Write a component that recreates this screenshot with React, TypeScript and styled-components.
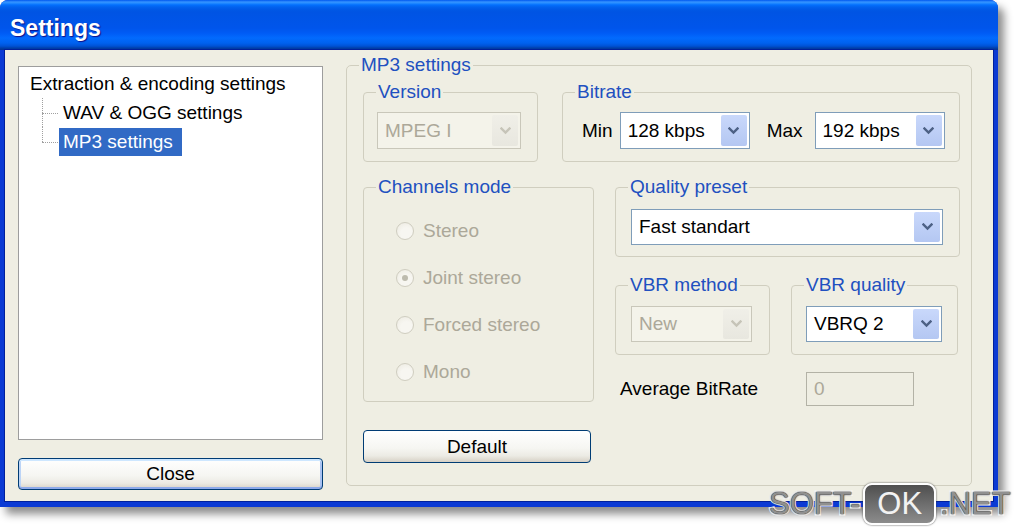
import React from "react";
import styled, { createGlobalStyle, css } from "styled-components";

const GlobalStyle = createGlobalStyle`
  html, body {
    margin: 0;
    padding: 0;
    background: #fff;
  }
  body {
    font-family: "Liberation Sans", Arial, sans-serif;
  }
`;

const Page = styled.div`
  position: relative;
  width: 1020px;
  height: 530px;
  overflow: hidden;
  background: #fff;
`;

const Window = styled.div`
  width: 998px;
  display: flex;
  flex-direction: column;
  border-radius: 8px 8px 0 0;
  background: #0b3ad4;
  box-shadow: 6px 7px 8px rgba(0, 0, 0, 0.45);
`;

const TitleBar = styled.div`
  height: 50px;
  box-sizing: border-box;
  display: flex;
  align-items: center;
  padding: 7px 0 0 10px;
  border-radius: 8px 8px 0 0;
  background: linear-gradient(
    to bottom,
    #0058ee 0%,
    #3593ff 4%,
    #288eff 6%,
    #127dff 8%,
    #036ffc 10%,
    #0262ee 14%,
    #0057e5 20%,
    #0054e3 24%,
    #0055eb 56%,
    #005bf5 66%,
    #026afe 76%,
    #0062ef 86%,
    #0052d6 92%,
    #0040ab 96%,
    #003092 100%
  );
  color: #fff;
  font-size: 23px;
  font-weight: bold;
  text-shadow: 1px 1px 1px #0f1089;
`;

const Client = styled.div`
  height: 451px;
  box-sizing: border-box;
  margin: 0 5px 6px;
  padding: 4px 20px 0 13px;
  display: flex;
  align-items: flex-start;
  gap: 23px;
  background: #efeee3;
  box-shadow: 0 0 0 1px #00209c;
  font-size: 19px;
  color: #000;
`;

const LeftColumn = styled.div`
  width: 305px;
  margin-top: 12px;
  display: flex;
  flex-direction: column;
  gap: 18px;
  flex: none;
`;

const Tree = styled.div`
  height: 374px;
  box-sizing: border-box;
  border: 1px solid #9d9d9d;
  background: #fff;
  padding: 2px 0 0 11px;
`;

const TreeRow = styled.div<{ $child?: boolean; $last?: boolean }>`
  position: relative;
  height: 29px;
  display: flex;
  align-items: center;
  padding-left: ${(p) => (p.$child ? 29 : 0)}px;

  ${(p) =>
    p.$child &&
    css`
      &::before {
        content: "";
        position: absolute;
        left: 12px;
        top: 50%;
        width: 16px;
        border-top: 1px dotted #a0a0a0;
      }
      &::after {
        content: "";
        position: absolute;
        left: 12px;
        top: 0;
        height: ${p.$last ? "50%" : "100%"};
        border-left: 1px dotted #a0a0a0;
      }
    `}
`;

const TreeLabel = styled.span<{ $selected?: boolean }>`
  height: 28px;
  display: flex;
  align-items: center;
  padding: 0 9px 0 4px;
  white-space: nowrap;
  ${(p) =>
    p.$selected &&
    css`
      background: #316ac5;
      color: #fff;
    `}
`;

const XPButton = styled.button<{ $primary?: boolean; $w?: number; $h: number }>`
  width: ${(p) => (p.$w ? `${p.$w}px` : "100%")};
  height: ${(p) => p.$h}px;
  box-sizing: border-box;
  border: 1px solid #003c74;
  border-radius: 4px;
  background: linear-gradient(
    180deg,
    #ffffff 0%,
    #f6f6f2 55%,
    #ecebe4 80%,
    #d6d0c5 100%
  );
  font-family: "Liberation Sans", Arial, sans-serif;
  font-size: 19px;
  color: #000;
  padding: 0;
  ${(p) =>
    p.$primary &&
    css`
      box-shadow: inset 0 -2px 0 #8eaaea, inset 0 2px 0 #cee7ff,
        inset 2px 0 0 #bcd4f6, inset -2px 0 0 #a9c2f2;
    `}
`;

const Group = styled.fieldset<{ $w?: number }>`
  margin: 0;
  padding: 0;
  min-width: 0;
  box-sizing: border-box;
  border: 1px solid #d0cebf;
  border-radius: 4px;
  ${(p) => (p.$w ? `width: ${p.$w}px; flex: none;` : "flex: 1;")}
`;

const Legend = styled.legend`
  margin-left: 12px;
  padding: 0 2px;
  font-size: 19px;
  line-height: 22px;
  color: #2150c0;
`;

const GroupBody = styled.div<{ $pad: string }>`
  padding: ${(p) => p.$pad};
`;

const MainGroup = styled.fieldset`
  margin: 0;
  padding: 0;
  width: 626px;
  flex: none;
  box-sizing: border-box;
  border: 1px solid #d0cebf;
  border-radius: 5px;
`;

const MainBody = styled.div`
  padding: 5px 11px 22px 16px;
  display: flex;
  flex-direction: column;
`;

const GroupRow = styled.div<{ $gap: number }>`
  display: flex;
  gap: ${(p) => p.$gap}px;
`;

const BottomGrid = styled.div`
  margin-top: 14px;
  display: grid;
  grid-template-columns: 231px 345px;
  column-gap: 21px;
  align-items: start;
`;

const Column = styled.div<{ $gap: number }>`
  display: flex;
  flex-direction: column;
  gap: ${(p) => p.$gap}px;
`;

const InlineRow = styled.div`
  display: flex;
  align-items: center;
`;

const FieldLabel = styled.span<{ $ml?: number; $mr?: number }>`
  margin-left: ${(p) => p.$ml ?? 0}px;
  margin-right: ${(p) => p.$mr ?? 0}px;
  white-space: nowrap;
`;

const Combo = styled.div<{ $disabled?: boolean; $w?: number; $h: number }>`
  width: ${(p) => (p.$w ? `${p.$w}px` : "100%")};
  height: ${(p) => p.$h}px;
  box-sizing: border-box;
  flex: none;
  display: flex;
  padding: 2px;
  border: 1px solid ${(p) => (p.$disabled ? "#c9c7ba" : "#7f9db9")};
  background: ${(p) => (p.$disabled ? "#f4f3ea" : "#fff")};
  color: ${(p) => (p.$disabled ? "#aca899" : "#000")};
`;

const ComboValue = styled.span`
  flex: 1;
  display: flex;
  align-items: center;
  padding-left: 5px;
  white-space: nowrap;
  overflow: hidden;
`;

const ComboArrow = styled.span<{ $disabled?: boolean }>`
  width: 26px;
  display: flex;
  align-items: center;
  justify-content: center;
  border-radius: 2px;
  background: ${(p) =>
    p.$disabled
      ? "linear-gradient(180deg, #f0efe8, #e8e7df)"
      : "linear-gradient(180deg, #c9d8fb, #b4c7f2)"};
  color: ${(p) => (p.$disabled ? "#c6c4b8" : "#4d6185")};
`;

const RadioList = styled.div`
  padding: 9px 0 6px 32px;
`;

const RadioRow = styled.div`
  height: 47px;
  display: flex;
  align-items: center;
  gap: 9px;
  color: #aca899;
`;

const RadioCircle = styled.span<{ $checked?: boolean }>`
  width: 18px;
  height: 18px;
  box-sizing: border-box;
  border-radius: 50%;
  border: 1px solid #cfcdc0;
  background: radial-gradient(circle at 60% 65%, #f7f6f1 40%, #ebe9df 100%);
  display: flex;
  align-items: center;
  justify-content: center;

  ${(p) =>
    p.$checked &&
    css`
      &::after {
        content: "";
        width: 6px;
        height: 6px;
        border-radius: 50%;
        background: #bdbbae;
      }
    `}
`;

const AverageRow = styled.div`
  display: flex;
  align-items: center;
  padding-left: 5px;
`;

const AverageLabel = styled.span`
  width: 186px;
  flex: none;
`;

const DisabledInput = styled.div`
  width: 108px;
  height: 34px;
  box-sizing: border-box;
  border: 1px solid #b3b2a6;
  background: #efeee3;
  color: #aca899;
  display: flex;
  align-items: center;
  padding-left: 7px;
`;

const Watermark = styled.div`
  position: absolute;
  left: 769px;
  top: 483px;
  height: 42px;
  display: flex;
  align-items: center;
  font-size: 31px;
  font-family: "Liberation Sans", Arial, sans-serif;
`;

const WatermarkText = styled.span`
  color: #909090;
  -webkit-text-stroke: 3px #fff;
  paint-order: stroke fill;
  text-shadow: 0 0 2px #222, 0 0 1px #222;
`;

const WatermarkBox = styled.span`
  height: 42px;
  box-sizing: border-box;
  margin: 0 4px 0 3px;
  padding: 0 12px;
  display: flex;
  align-items: center;
  border: 2px solid #fff;
  border-radius: 9px;
  background: linear-gradient(180deg, #4f4f4f, #8c8c8c);
  color: #f2f2f2;
  box-shadow: 0 0 2px #333;
`;

const Chevron = () => (
  <svg width="11" height="8" viewBox="0 0 11 8">
    <polyline
      points="1.5,1.5 5.5,5.5 9.5,1.5"
      fill="none"
      stroke="currentColor"
      strokeWidth="2.4"
      strokeLinecap="square"
    />
  </svg>
);

const ComboBox = ({
  value,
  disabled,
  w,
  h,
}: {
  value: string;
  disabled?: boolean;
  w?: number;
  h: number;
}) => (
  <Combo $disabled={disabled} $w={w} $h={h}>
    <ComboValue>{value}</ComboValue>
    <ComboArrow $disabled={disabled}>
      <Chevron />
    </ComboArrow>
  </Combo>
);

const channels = [
  { label: "Stereo", checked: false },
  { label: "Joint stereo", checked: true },
  { label: "Forced stereo", checked: false },
  { label: "Mono", checked: false },
];

export default function App() {
  return (
    <Page>
      <GlobalStyle />
      <Window>
        <TitleBar>Settings</TitleBar>
        <Client>
          <LeftColumn>
            <Tree>
              <TreeRow>Extraction &amp; encoding settings</TreeRow>
              <TreeRow $child>
                <TreeLabel>WAV &amp; OGG settings</TreeLabel>
              </TreeRow>
              <TreeRow $child $last>
                <TreeLabel $selected>MP3 settings</TreeLabel>
              </TreeRow>
            </Tree>
            <XPButton $primary $h={32}>
              Close
            </XPButton>
          </LeftColumn>

          <MainGroup>
            <Legend>MP3 settings</Legend>
            <MainBody>
              <GroupRow $gap={24}>
                <Group $w={175}>
                  <Legend>Version</Legend>
                  <GroupBody $pad="9px 16px 12px 13px">
                    <ComboBox value="MPEG I" disabled h={37} />
                  </GroupBody>
                </Group>
                <Group>
                  <Legend>Bitrate</Legend>
                  <GroupBody $pad="9px 14px 12px 19px">
                    <InlineRow>
                      <FieldLabel $mr={7}>Min</FieldLabel>
                      <ComboBox value="128 kbps" w={130} h={37} />
                      <FieldLabel $ml={17} $mr={12}>
                        Max
                      </FieldLabel>
                      <ComboBox value="192 kbps" w={130} h={37} />
                    </InlineRow>
                  </GroupBody>
                </Group>
              </GroupRow>

              <BottomGrid>
                <Column $gap={28}>
                  <Group>
                    <Legend>Channels mode</Legend>
                    <RadioList>
                      {channels.map((c) => (
                        <RadioRow key={c.label}>
                          <RadioCircle $checked={c.checked} />
                          {c.label}
                        </RadioRow>
                      ))}
                    </RadioList>
                  </Group>
                  <XPButton $w={228} $h={33}>
                    Default
                  </XPButton>
                </Column>

                <Column $gap={17}>
                  <Group>
                    <Legend>Quality preset</Legend>
                    <GroupBody $pad="11px 16px 11px 15px">
                      <ComboBox value="Fast standart" h={36} />
                    </GroupBody>
                  </Group>
                  <GroupRow $gap={21}>
                    <Group $w={155}>
                      <Legend>VBR method</Legend>
                      <GroupBody $pad="10px 17px 12px 15px">
                        <ComboBox value="New" disabled h={36} />
                      </GroupBody>
                    </Group>
                    <Group $w={167}>
                      <Legend>VBR quality</Legend>
                      <GroupBody $pad="10px 15px 12px 14px">
                        <ComboBox value="VBRQ 2" h={36} />
                      </GroupBody>
                    </Group>
                  </GroupRow>
                  <AverageRow>
                    <AverageLabel>Average BitRate</AverageLabel>
                    <DisabledInput>0</DisabledInput>
                  </AverageRow>
                </Column>
              </BottomGrid>
            </MainBody>
          </MainGroup>
        </Client>
      </Window>

      <Watermark>
        <WatermarkText>SOFT-</WatermarkText>
        <WatermarkBox>OK</WatermarkBox>
        <WatermarkText>.NET</WatermarkText>
      </Watermark>
    </Page>
  );
}
